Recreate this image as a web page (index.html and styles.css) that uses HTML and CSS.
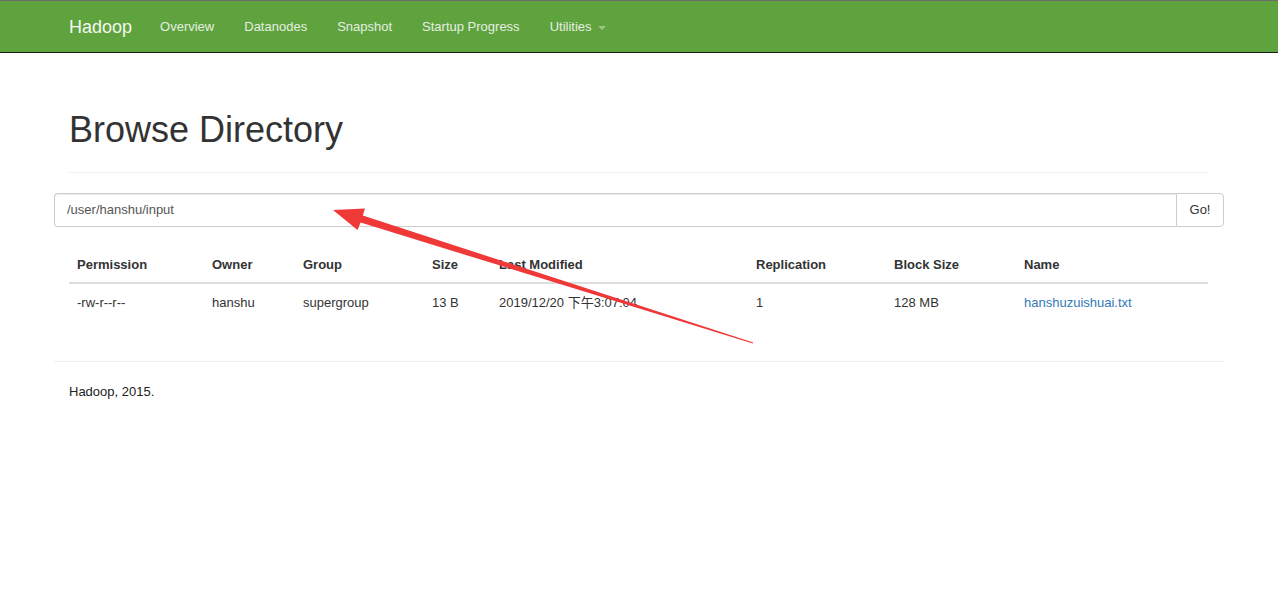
FILE: index.html
```html
<!DOCTYPE html>
<html lang="en">
<head>
<meta charset="utf-8">
<title>Browsing HDFS</title>
<link rel="stylesheet" href="styles.css">
</head>
<body>
<header class="navbar">
  <div class="container nav-inner">
    <a class="brand" href="#">Hadoop</a>
    <ul class="nav">
      <li><a href="#">Overview</a></li>
      <li><a href="#">Datanodes</a></li>
      <li><a href="#">Snapshot</a></li>
      <li><a href="#">Startup Progress</a></li>
      <li><a href="#">Utilities <span class="caret"></span></a></li>
    </ul>
  </div>
</header>

<main class="container">
  <div class="page-header">
    <h1>Browse Directory</h1>
  </div>

  <form class="input-group">
    <input class="path" type="text" value="/user/hanshu/input">
    <button class="go" type="button">Go!</button>
  </form>

  <div class="inner">
    <table class="table">
      <thead>
        <tr>
          <th class="c1">Permission</th>
          <th class="c2">Owner</th>
          <th class="c3">Group</th>
          <th class="c4">Size</th>
          <th class="c5">Last Modified</th>
          <th class="c6">Replication</th>
          <th class="c7">Block Size</th>
          <th class="c8">Name</th>
        </tr>
      </thead>
      <tbody>
        <tr>
          <td>-rw-r--r--</td>
          <td>hanshu</td>
          <td>supergroup</td>
          <td>13 B</td>
          <td>2019/12/20 下午3:07:04</td>
          <td>1</td>
          <td>128 MB</td>
          <td><a href="#">hanshuzuishuai.txt</a></td>
        </tr>
      </tbody>
    </table>
  </div>

  <hr class="footer-rule">
  <p class="footer">Hadoop, 2015.</p>
</main>

<svg class="annotation" width="1278" height="594" viewBox="0 0 1278 594" aria-hidden="true">
  <polygon fill="#ef3838" points="333,210 365,208.5 362.8,215.6 753.2,342.6 752.8,343.4 360.6,222.6 357.5,230"/>
</svg>
</body>
</html>
```

FILE: styles.css
```css
* { box-sizing: border-box; }

html, body {
  margin: 0;
  padding: 0;
  background: #fff;
}

body {
  font-family: "Liberation Sans", Arial, "Noto Sans CJK SC", sans-serif;
  font-size: 13px;
  line-height: 1.42857;
  color: #333;
  position: relative;
  width: 1278px;
  height: 594px;
  overflow: hidden;
}

.container {
  width: 1170px;
  margin: 0 auto;
}

/* Navbar */
.navbar {
  background: #5fa33e;
  border-top: 1px solid #6d6d6d;
  border-bottom: 1px solid #1d1d1d;
  height: 53px;
}

.nav-inner {
  display: flex;
  align-items: stretch;
  height: 51px;
}

.brand {
  display: block;
  padding: 1px 15px 0;
  font-size: 18px;
  line-height: 50px;
  color: #f4f7f2;
  text-decoration: none;
}

.nav {
  display: flex;
  list-style: none;
  margin: 0 0 0 -2px;
  padding: 0;
}

.nav a {
  display: block;
  padding: 1px 15px 0;
  line-height: 50px;
  color: #e6eee1;
  text-decoration: none;
  font-size: 13px;
}

.caret {
  display: inline-block;
  width: 0;
  height: 0;
  margin-left: 3px;
  vertical-align: middle;
  border-top: 4px solid rgba(230, 236, 226, 0.45);
  border-left: 4px solid transparent;
  border-right: 4px solid transparent;
}

/* Header */
.page-header {
  margin: 57px 15px 20px;
  padding-bottom: 12px;
  border-bottom: 1px solid #eee;
}

.page-header h1 {
  margin: 0 0 10px;
  font-size: 36px;
  font-weight: 400;
  line-height: 1.1;
  color: #333;
}

/* Input group */
.input-group {
  display: flex;
  height: 34px;
  margin: 0 0 20px;
}

.path {
  flex: 1;
  height: 34px;
  margin: 0;
  padding: 6px 12px;
  border: 1px solid #ccc;
  border-right: 0;
  border-radius: 4px 0 0 4px;
  font-family: "Liberation Sans", Arial, sans-serif;
  font-size: 13px;
  color: #555;
  box-shadow: inset 0 1px 1px rgba(0, 0, 0, 0.075);
  outline: none;
}

.go {
  width: 48px;
  height: 34px;
  margin: 0;
  padding: 6px 10px;
  border: 1px solid #ccc;
  border-radius: 0 4px 4px 0;
  background: #fff;
  font-family: "Liberation Sans", Arial, sans-serif;
  font-size: 13px;
  color: #333;
}

/* Table */
.inner {
  padding: 0 15px;
}

.table {
  width: 1139px;
  border-collapse: collapse;
  border-spacing: 0;
  margin: 0 0 40px;
  table-layout: fixed;
}

.table th,
.table td {
  text-align: left;
  line-height: 1.42857;
  font-size: 13px;
  white-space: nowrap;
}

.table th {
  padding: 9px 8px 8px;
  vertical-align: bottom;
  font-weight: 700;
  border-bottom: 2px solid #ddd;
}

.table td {
  padding: 10px 8px 8px;
  vertical-align: top;
}

.table a {
  color: #337ab7;
  text-decoration: none;
}

.c1 { width: 135px; }
.c2 { width: 91px; }
.c3 { width: 129px; }
.c4 { width: 67px; }
.c5 { width: 257px; }
.c6 { width: 138px; }
.c7 { width: 130px; }
.c8 { width: 192px; }

/* Footer */
.footer-rule {
  margin: 0;
  border: 0;
  border-top: 1px solid #eee;
}

.footer {
  margin: 21px 15px 0;
  font-size: 13px;
  color: #222;
}

.annotation {
  position: absolute;
  top: 0;
  left: 0;
  pointer-events: none;
}
```
